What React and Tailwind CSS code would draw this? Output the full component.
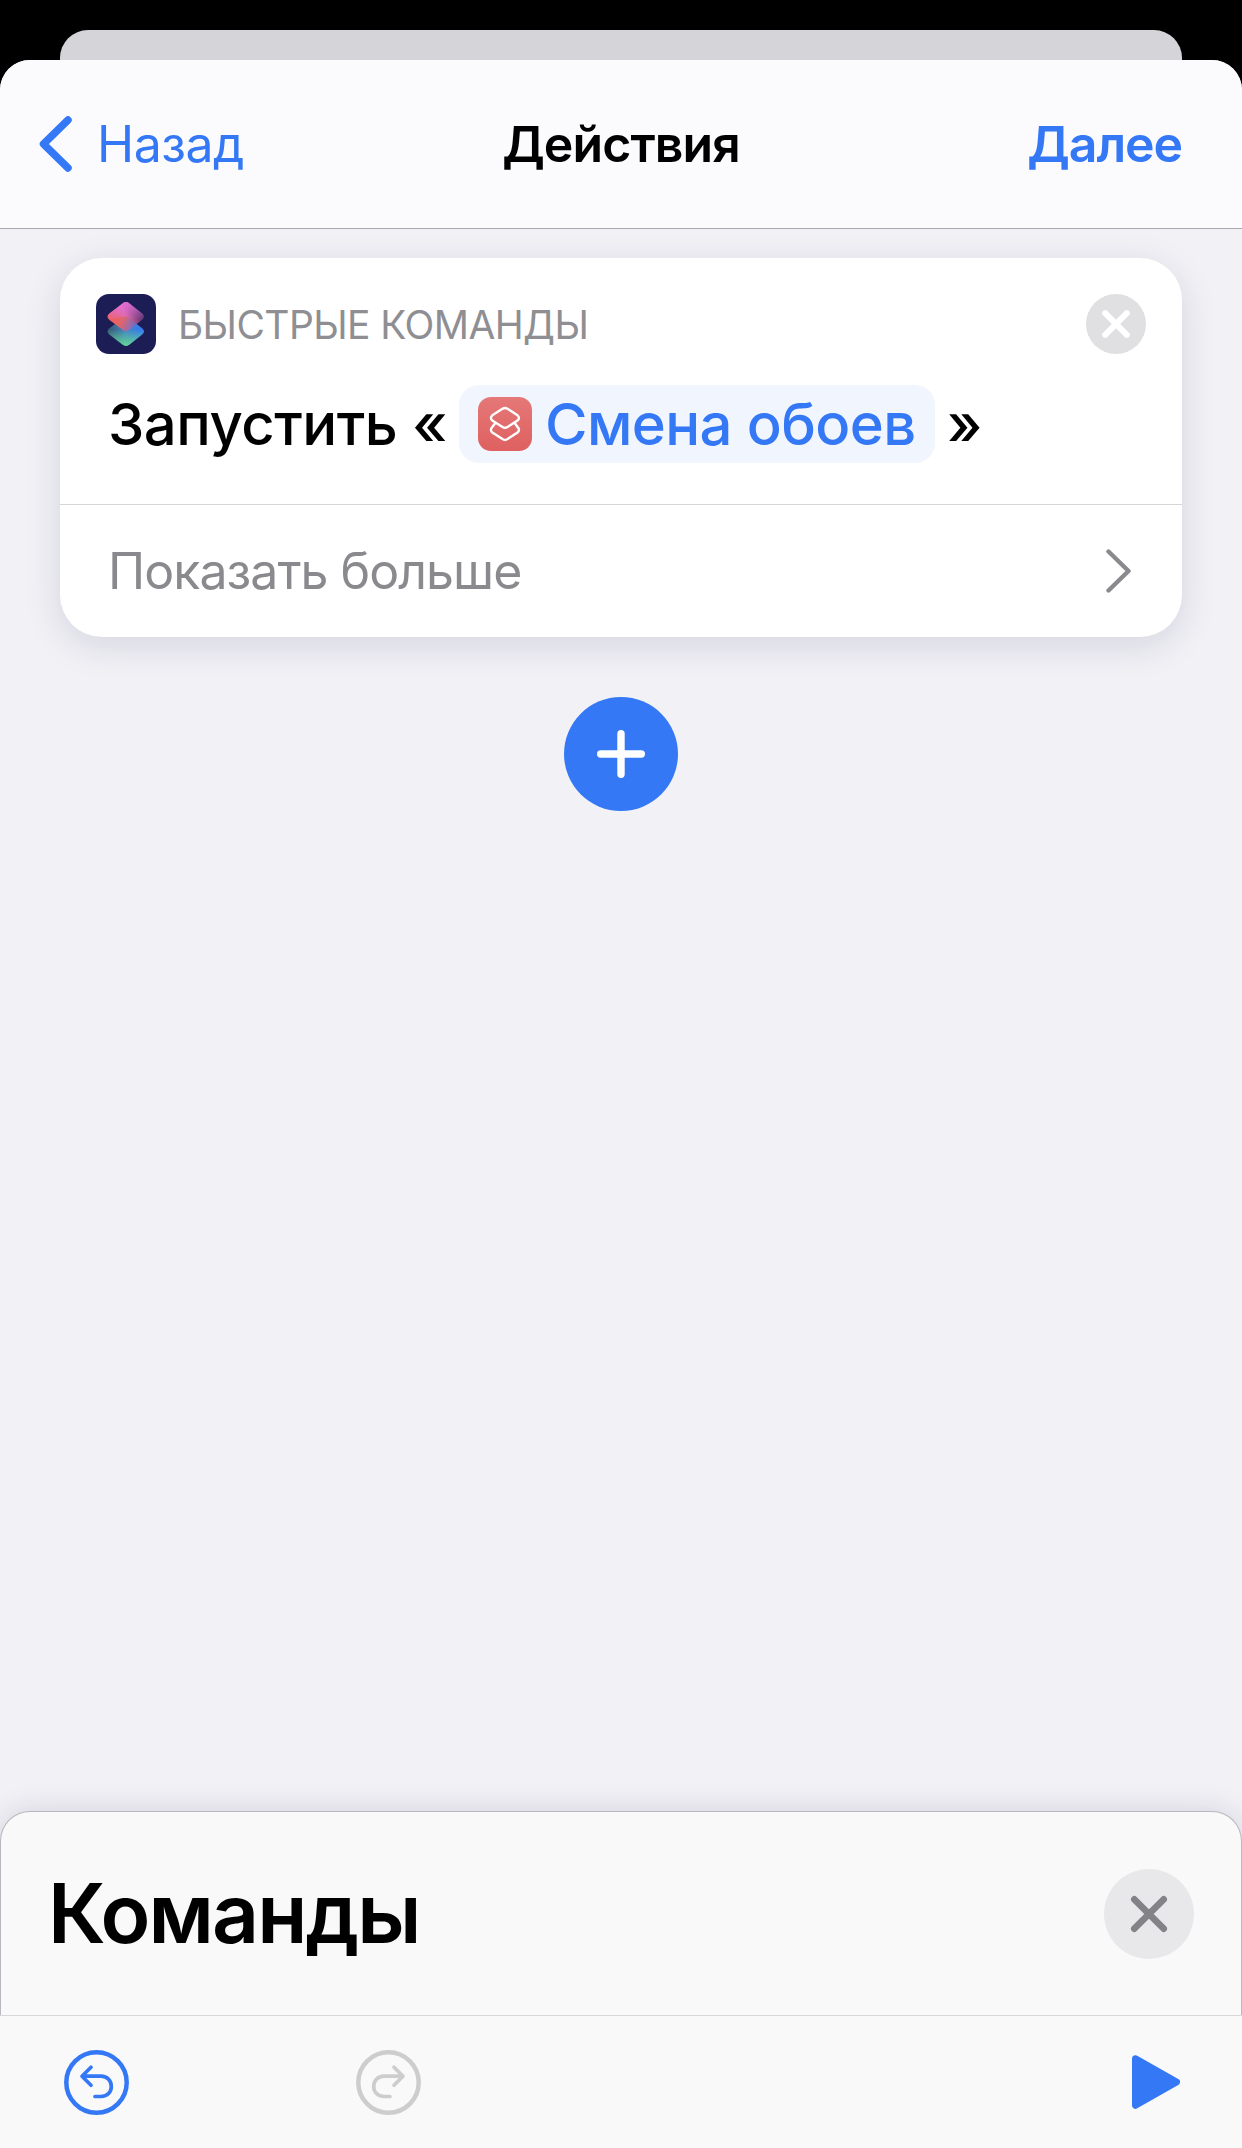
import React from "react";

const ShortcutsAppIcon = () => (
  <svg viewBox="0 0 60 60" className="w-[60px] h-[60px] shrink-0">
    <defs>
      <linearGradient id="topLayer" x1="0" y1="0.65" x2="1" y2="0.35">
        <stop offset="0" stopColor="#f0605a" />
        <stop offset="0.5" stopColor="#dd69a8" />
        <stop offset="1" stopColor="#3d2a63" />
      </linearGradient>
      <linearGradient id="topShine" x1="0" y1="0" x2="0" y2="1">
        <stop offset="0" stopColor="#e56fe0" stopOpacity="0.9" />
        <stop offset="0.6" stopColor="#e56fe0" stopOpacity="0" />
      </linearGradient>
      <linearGradient id="bottomLayer" x1="0" y1="0.4" x2="1" y2="0.4">
        <stop offset="0" stopColor="#35566f" />
        <stop offset="0.5" stopColor="#4386c4" />
        <stop offset="1" stopColor="#3379f6" />
      </linearGradient>
      <linearGradient id="bottomShine" x1="0" y1="0" x2="0" y2="1">
        <stop offset="0.4" stopColor="#63d694" stopOpacity="0" />
        <stop offset="1" stopColor="#63d694" />
      </linearGradient>
      <linearGradient id="fold" gradientUnits="userSpaceOnUse" x1="14" y1="22" x2="40" y2="34">
        <stop offset="0" stopColor="#f0605a" />
        <stop offset="0.45" stopColor="#e0645f" />
        <stop offset="1" stopColor="#4374df" />
      </linearGradient>
    </defs>
    <rect width="60" height="60" rx="13" fill="#1d1d56" />
    <path d="M26.5 24.5 L13 34.4 Q10 37.3 13 40.2 L26.5 50.5 Q30 53.4 33.5 50.5 L46.5 40.2 Q49.5 37.3 46.5 34.4 L33.5 24.5 Z" fill="url(#bottomLayer)" />
    <path d="M26.5 24.5 L13 34.4 Q10 37.3 13 40.2 L26.5 50.5 Q30 53.4 33.5 50.5 L46.5 40.2 Q49.5 37.3 46.5 34.4 L33.5 24.5 Z" fill="url(#bottomShine)" />
    <path d="M26.5 9.5 Q30 6.6 33.5 9.5 L46.5 19.7 Q49.5 22.6 46.5 25.5 L33.5 35.5 Q30 38.4 26.5 35.5 L13 25.5 Q10 22.6 13 19.7 Z" fill="url(#topLayer)" />
    <path d="M26.5 9.5 Q30 6.6 33.5 9.5 L46.5 19.7 Q49.5 22.6 46.5 25.5 L33.5 35.5 Q30 38.4 26.5 35.5 L13 25.5 Q10 22.6 13 19.7 Z" fill="url(#topShine)" />
    <path d="M13 25.5 L30 22.3 L39.8 30.3 L33.5 35.5 Q30 38.4 26.5 35.5 Z" fill="url(#fold)" opacity="0.75" />
  </svg>
);

const ShortcutGlyph = () => (
  <svg viewBox="0 0 54 54" className="w-[54px] h-[54px] shrink-0">
    <defs>
      <linearGradient id="coral" x1="0" y1="0" x2="0" y2="1">
        <stop offset="0" stopColor="#e57878" />
        <stop offset="1" stopColor="#df6060" />
      </linearGradient>
    </defs>
    <rect width="54" height="54" rx="13" fill="url(#coral)" />
    <g fill="none" stroke="#fff" strokeWidth="2.4" strokeLinejoin="round">
      <path d="M24.5 11.8 Q27 10.2 29.5 11.8 L39.5 18.3 Q42.5 21 39.5 23.6 L29.5 30 Q27 31.6 24.5 30 L14.3 23.6 Q11.5 21 14.3 18.3 Z" />
      <path d="M17.5 25.7 L14.3 30 Q11.500 32.700 14.3 35.6 L24.5 42.1 Q27 43.9 29.5 42.1 L39.5 35.6 Q42.500 32.700 39.500 30 L36.5 25.7" />
    </g>
  </svg>
);

const UndoIcon = ({ className }) => (
  <svg
    viewBox="0 0 65 65"
    className={className}
    fill="none"
    stroke="currentColor"
    strokeLinecap="round"
    strokeLinejoin="round"
  >
    <circle cx="32.5" cy="32.5" r="30.2" strokeWidth="4.5" />
    <path d="M27 17.2 L18 26.2 L27 35.2 M18.5 26.2 H37 C43.5 26.2 47.3 31 47.3 36.5 C47.3 42 43.5 46.5 37 46.5 H31" strokeWidth="3.7" />
  </svg>
);

const App = () => {
  return (
    <div className="h-[2148px] w-full bg-black flex flex-col overflow-hidden font-['Inter',sans-serif]">
      {/* Sheet peeking out from behind */}
      <div className="mt-[30px] mx-[60px] h-[30px] rounded-t-[28px] bg-[#d5d4d9] shrink-0" />

      <div className="flex-1 flex flex-col bg-[#f1f1f6] rounded-t-[30px] overflow-hidden">
        {/* Nav bar */}
        <header className="h-[169px] shrink-0 grid grid-cols-3 items-center bg-[#fbfbfd] border-b border-[#a9a8ad] pl-[39px] pr-[60px] text-[50px] leading-none">
          <button className="flex items-center gap-[25px] text-[#3478f6]">
            <svg viewBox="0 0 33 56" className="w-[33px] h-14" fill="none" stroke="currentColor" strokeWidth="7.5" strokeLinecap="round" strokeLinejoin="round">
              <path d="M29 4 L4.5 28 L29 52" />
            </svg>
            <span className="tracking-[-0.5px]">Назад</span>
          </button>
          <h1 className="justify-self-center ml-[21px] font-semibold tracking-[-0.9px] whitespace-nowrap">Действия</h1>
          <button className="justify-self-end font-semibold tracking-[-1.1px] text-[#3478f6]">Далее</button>
        </header>

        <main className="flex-1 flex flex-col items-center px-[60px] pt-[29px]">
          {/* Action card */}
          <section className="w-full h-[379px] bg-white rounded-[42px] shadow-[0_9px_36px_rgba(40,30,80,0.13)]">
            <div className="h-[246px] pt-9 px-9">
              <div className="flex items-center h-[60px]">
                <ShortcutsAppIcon />
                <span className="ml-[22px] text-[39px] leading-none tracking-[-0.6px] text-[#8e8e93]">БЫСТРЫЕ КОМАНДЫ</span>
                <svg viewBox="0 0 60 60" className="ml-auto w-[60px] h-[60px]">
                  <circle cx="30" cy="30" r="30" fill="#e0e0e2" />
                  <path d="M19.2 19.2 L40.8 40.8 M40.8 19.2 L19.2 40.8" stroke="#fff" strokeWidth="6" strokeLinecap="round" />
                </svg>
              </div>
              <div className="flex items-center mt-[31px] pl-3 text-[58px] leading-none font-medium tracking-[-0.5px] whitespace-nowrap">
                <span className="w-[351px]">Запустить «</span>
                <span className="flex items-center w-[476px] h-[78px] pl-[19px] rounded-[20px] bg-[#f0f5fe] text-[#3478f6]">
                  <ShortcutGlyph />
                  <span className="ml-[13px] tracking-[-0.6px]">Смена обоев</span>
                </span>
                <span className="ml-3">»</span>
              </div>
            </div>
            <button className="w-full h-[133px] flex items-center justify-between border-t border-[#d6d6d9] pl-12 pr-[51px] text-[50px] leading-none text-[#8a8a8e]">
              <span className="tracking-[-0.95px]">Показать больше</span>
              <svg viewBox="0 0 25 44" className="w-[25px] h-11" fill="none" stroke="currentColor" strokeWidth="4.4" strokeLinecap="round" strokeLinejoin="round">
                <path d="M2.5 2.5 L22.5 22 L2.5 41.5" />
              </svg>
            </button>
          </section>

          <button className="mt-[60px] w-[114px] h-[114px] rounded-full bg-[#3478f6] flex items-center justify-center">
            <svg viewBox="0 0 48 48" className="w-12 h-12" stroke="#fff" strokeWidth="7.4" strokeLinecap="round">
              <path d="M24 3.7 V44.3 M3.7 24 H44.3" />
            </svg>
          </button>
        </main>

        {/* Actions drawer */}
        <section className="h-[204px] shrink-0 flex items-center justify-between bg-[#f9f9f9] border border-b-0 border-[#b9b8be] rounded-t-[30px] px-[47px] shadow-[0_0_30px_rgba(40,30,80,0.14)]">
          <h2 className="text-[82px] leading-none font-semibold tracking-[-1.9px]">Команды</h2>
          <button className="w-[90px] h-[90px] rounded-full bg-[#e8e8ea] text-[#828287] flex items-center justify-center">
            <svg viewBox="0 0 38 38" className="w-[38px] h-[38px]" stroke="currentColor" strokeWidth="6.6" strokeLinecap="round">
              <path d="M4.3 4.3 L33.7 33.7 M33.7 4.3 L4.3 33.7" />
            </svg>
          </button>
        </section>

        <footer className="relative h-[133px] shrink-0 flex items-center bg-[#f9f9f9] border-t border-[#d8d8da] pl-16 pr-[62px]">
          <UndoIcon className="w-[65px] h-[65px] text-[#3478f6]" />
          <UndoIcon className="w-[65px] h-[65px] ml-[227px] text-[#cdcdcd] -scale-x-100" />
          <svg viewBox="0 0 48 54" className="ml-auto w-12 h-[54px] text-[#3478f6]" fill="currentColor" stroke="currentColor" strokeWidth="7" strokeLinejoin="round">
            <path d="M3.5 3.7 L44.5 27 L3.5 50.3 Z" />
          </svg>
        </footer>
      </div>
    </div>
  );
};

export default App;
